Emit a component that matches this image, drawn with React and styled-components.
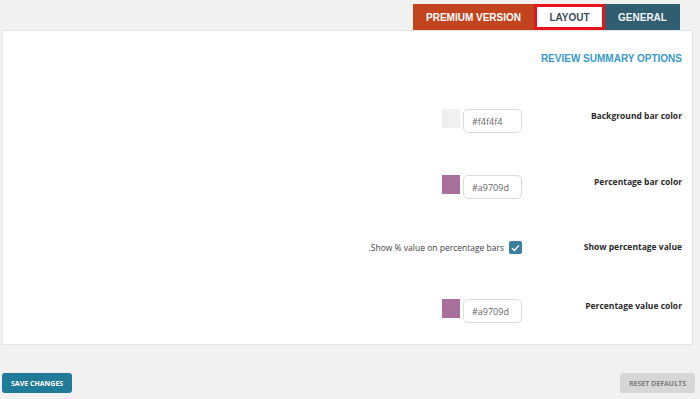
import React from 'react';
import styled, { createGlobalStyle } from 'styled-components';

const GlobalStyle = createGlobalStyle`
    body {
        margin: 0;
        background: #f1f1f1;
        font-family: "Open Sans", "Liberation Sans", sans-serif;
    }
`;

const Page = styled.div`
    width: 700px;
    height: 399px;
    padding-top: 4px;
    box-sizing: border-box;
`;

const TabBar = styled.div`
    display: flex;
    justify-content: flex-end;
    margin-right: 20px;
`;

const Tab = styled.div`
    height: 26px;
    box-sizing: border-box;
    display: flex;
    align-items: center;
    justify-content: center;
    width: ${p => p.$width}px;
    font-family: "Liberation Sans", Arial, sans-serif;
    font-size: 10px;
    font-weight: 700;
    color: ${p => p.$color};
    background: ${p => p.$bg};
    border: ${p => (p.$active ? '3px solid #e8141b' : 'none')};
`;

const Panel = styled.div`
    margin: 0 7px 0 2px;
    height: 315px;
    box-sizing: border-box;
    background: #fff;
    border: 1px solid #e4e4e4;
    padding: 22px 10px 0 0;
`;

const Heading = styled.div`
    text-align: right;
    font-family: "Liberation Sans", Arial, sans-serif;
    font-size: 10px;
    line-height: 12px;
    font-weight: 700;
    color: #3a9ac8;
    margin-bottom: 44px;
`;

const Rows = styled.div`
    display: flex;
    flex-direction: column;
    gap: 42px;
`;

const Row = styled.div`
    display: grid;
    grid-template-columns: 1fr 160px;
    padding-bottom: ${p => p.$extra || 0}px;
`;

const Field = styled.div`
    display: flex;
    justify-content: flex-end;
    align-items: center;
    gap: ${p => p.$gap || 3}px;
`;

const Label = styled.div`
    text-align: right;
    font-size: 8.5px;
    font-weight: 700;
    color: #2a2a2a;
    line-height: 11px;
    padding-top: ${p => (p.$tight ? 0 : 1)}px;
`;

const Swatch = styled.div`
    width: 18px;
    height: 19px;
    background: ${p => p.$color};
    align-self: flex-start;
`;

const ColorInput = styled.div`
    width: 59px;
    height: 24px;
    box-sizing: border-box;
    border: 1px solid #dcdcdc;
    border-radius: 5px;
    display: flex;
    align-items: center;
    padding-left: 8px;
    font-size: 9px;
    color: #666;
`;

const CheckText = styled.span`
    font-size: 8.5px;
    color: #444;
`;

const Checkbox = styled.div`
    width: 13px;
    height: 13px;
    border-radius: 2px;
    background: #3a7ea0;
    display: flex;
    align-items: center;
    justify-content: center;
`;

const Footer = styled.div`
    display: flex;
    justify-content: space-between;
    margin: 28px 5px 0 2px;
`;

const Button = styled.div`
    height: 20px;
    padding: 0 ${p => p.$pad}px;
    border-radius: 3px;
    display: flex;
    align-items: center;
    font-size: 7px;
    font-weight: 700;
    background: ${p => p.$bg};
    color: ${p => p.$color};
`;

const rowsData = [
    { label: 'Background bar color', color: '#f0f0f0', value: '#f4f4f4' },
    { label: 'Percentage bar color', color: '#a9709d', value: '#a9709d' },
    { label: 'Show percentage value', check: true },
    { label: 'Percentage value color', color: '#a9709d', value: '#a9709d' },
];

export default function App() {
    return (
        <Page>
            <GlobalStyle />
            <TabBar>
                <Tab $width={121} $bg="#c1441e" $color="#fff">PREMIUM VERSION</Tab>
                <Tab $width={71} $bg="#fff" $color="#3d4d59" $active>LAYOUT</Tab>
                <Tab $width={75} $bg="#2f5e70" $color="#f2f2f2">GENERAL</Tab>
            </TabBar>
            <Panel>
                <Heading>REVIEW SUMMARY OPTIONS</Heading>
                <Rows>
                    {rowsData.map(r => (
                        <Row key={r.label} $extra={r.check ? 3 : 0}>
                            {r.check ? (
                                <Field $gap={5}>
                                    <CheckText>.Show % value on percentage bars</CheckText>
                                    <Checkbox>
                                        <svg width="9" height="8" viewBox="0 0 9 8">
                                            <path d="M1 4.2 L3.4 6.4 L8 1.4" stroke="#fff" strokeWidth="1.4" fill="none" />
                                        </svg>
                                    </Checkbox>
                                </Field>
                            ) : (
                                <Field>
                                    <Swatch $color={r.color} />
                                    <ColorInput>{r.value}</ColorInput>
                                </Field>
                            )}
                            <Label $tight={r.check}>{r.label}</Label>
                        </Row>
                    ))}
                </Rows>
            </Panel>
            <Footer>
                <Button $pad={9} $bg="#1f7b98" $color="#fff">SAVE CHANGES</Button>
                <Button $pad={9} $bg="#d6d6d6" $color="#808080">RESET DEFAULTS</Button>
            </Footer>
        </Page>
    );
}
